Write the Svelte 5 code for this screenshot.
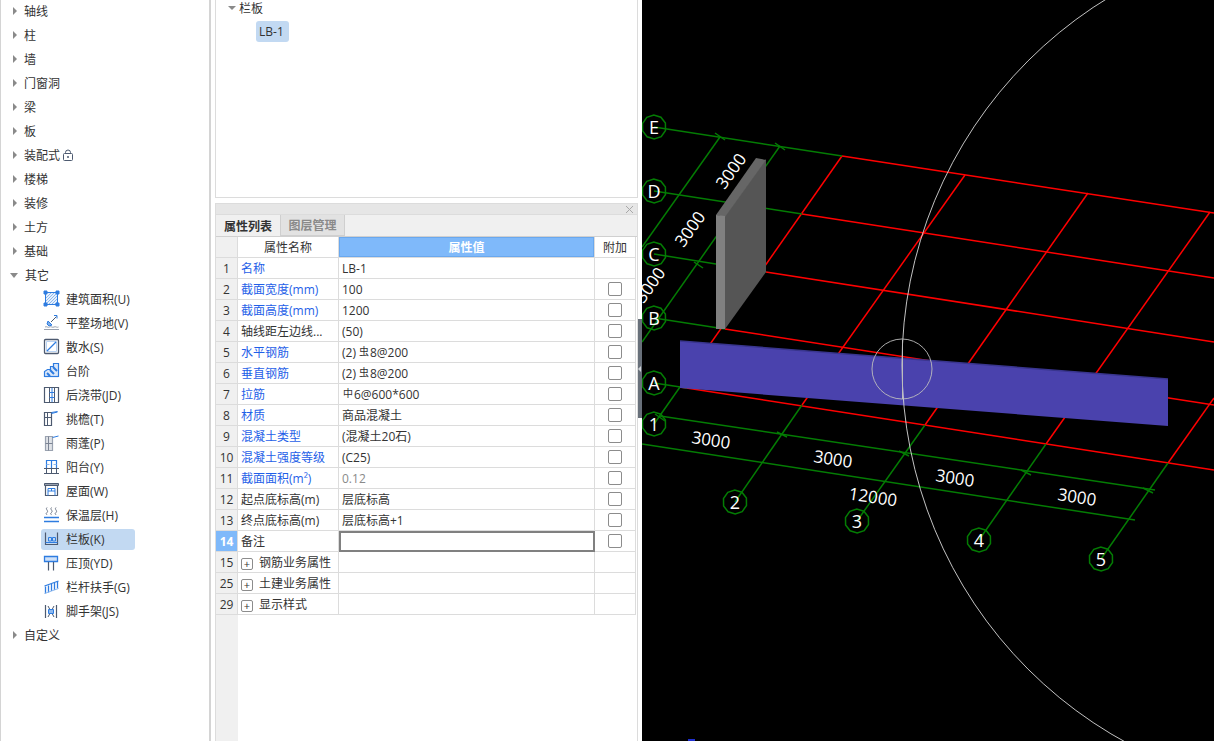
<script>
	const topGroups = ['轴线', '柱', '墙', '门窗洞', '梁', '板', '装配式', '楼梯', '装修', '土方', '基础'];

	const D = '#4d5a70';
	const B = '#2e7ce0';
	const L = '#8db8ee';
	const G = '#9aa2b0';

	// each icon: list of [path, stroke, fill, stroke width]
	const others = [
		{ name: '建筑面积(U)', icon: [
			['M2.500 2.500h12v12h-12z', B, '#e6f0fc', 1],
			['M3 8l5-5M3 11l8-8M3 14l11-11M6 14l8-8M9 14l5-5M12 14l2-2', L, 'none', 1],
			['M1 1h3v3H1zM13 1h3v3h-3zM1 13h3v3H1zM13 13h3v3h-3z', B, B, 1]
		] },
		{ name: '平整场地(V)', icon: [
			['M8 8l5.500-5.500', D, 'none', 1],
			['M5 7l4 4-3 1-2-2z', B, '#7fb0ea', 1],
			['M11 1.500h3v3', B, 'none', 1],
			['M2 13c1.500-1 3 1 4.500 0s3 1 4.500 0 3 1 4.500 0', G, 'none', 1],
			['M1 15.500h15', G, 'none', 1]
		] },
		{ name: '散水(S)', icon: [
			['M2.500 1.500h12a1 1 0 0 1 1 1v12a1 1 0 0 1-1 1h-12a1 1 0 0 1-1-1v-12a1 1 0 0 1 1-1z', D, '#fff', 1.300],
			['M3.500 3.500h10v10h-10z', '#b9d3f3', 'none', 1],
			['M4 13l9-9', B, 'none', 1.300]
		] },
		{ name: '台阶', icon: [
			['M1.500 14.500v-5l3-2h3v-3h3v-3h5v13z', B, '#dbe8fa', 1.200],
			['M4 11l3 3M7 8l4 4M10 5l4 4', B, 'none', 2],
			['M1.500 14.500h14', B, 'none', 1.200]
		] },
		{ name: '后浇带(JD)', icon: [
			['M1.500 1.500h14v15h-14z', D, 'none', 1.200],
			['M6.500 1.500v15M11.500 1.500v15', D, 'none', 1],
			['M6.500 6.500h5M6.500 11.500h5M9 2v14', B, 'none', 1]
		] },
		{ name: '挑檐(T)', icon: [
			['M1.500 2.500h7v13h-7z', D, 'none', 1.200],
			['M4.500 2.500v13M1.500 7.500h7', D, 'none', 1],
			['M8.500 3.500l6-1.500M8.500 2.500l6-1', B, 'none', 1]
		] },
		{ name: '雨蓬(P)', icon: [
			['M2.500 2.500h7v14h-7z', G, '#dfe2e7', 1.200],
			['M5.500 2.500v14', '#7c8494', 'none', 1],
			['M2.500 9.500h7', '#7c8494', 'none', 1],
			['M9.500 3.500l6-1.500', B, 'none', 1]
		] },
		{ name: '阳台(Y)', icon: [
			['M3.500 10V2.500h10V10M8.500 2.500V10', B, 'none', 1.200],
			['M3.500 6.500h3M10.500 6.500h3', L, 'none', 1],
			['M1 10.500h15M1 15.500h15', D, 'none', 1.200],
			['M3.500 10.500v5M8.500 10.500v5M13.500 10.500v5', D, 'none', 1]
		] },
		{ name: '屋面(W)', icon: [
			['M2.500 3.500h12v10h-12z', D, 'none', 1.200],
			['M1.500 1.500h14v2h-14z', D, '#99a1ae', 1],
			['M5 6.500h7v2.500H5zM5 9v4.500M12 9v4.500M8.500 6.500V9', B, 'none', 1]
		] },
		{ name: '保温层(H)', icon: [
			['M4 1.500c-2 2 2 3 0 5s0 1.500 0 2.500M8.500 1.500c-2 2 2 3 0 5s0 1.500 0 2.500M13 1.500c-2 2 2 3 0 5s0 1.500 0 2.500', '#6e7888', 'none', 1],
			['M1 11.500h15M1 15.500h15', B, 'none', 1.300]
		] },
		{ name: '栏板(K)', icon: [
			['M2.500 2.500v12h12v-12', D, 'none', 1.200],
			['M2.500 12.500h12', B, 'none', 1],
			['M5.500 7.500h3v3.500h-3zM9.500 7.500h3v3.500h-3z', B, 'none', 1]
		] },
		{ name: '压顶(YD)', icon: [
			['M1.500 2.500h13v5h-13z', B, '#cfe1f8', 1.300],
			['M5.500 8v8.500M10.500 8v8.500', D, 'none', 1.200]
		] },
		{ name: '栏杆扶手(G)', icon: [
			['M1.500 8l14-5', B, 'none', 1.300],
			['M2.500 8.500v7M5.500 7.500v7M8.500 6v7M11.500 5v7M14.500 3.500v7', B, 'none', 1.300],
			['M1.500 15.500l14-5', L, 'none', 1]
		] },
		{ name: '脚手架(JS)', icon: [
			['M2.500 3v13M13.500 3v13', D, 'none', 1.200],
			['M5 4l6 11M11 4L5 15', D, 'none', 1],
			['M5.500 7.500h5v4h-5z', B, L, 1]
		] }
	];

	const rows = [
		{ no: 1, name: '名称', value: 'LB-1', link: true, nocheck: true },
		{ no: 2, name: '截面宽度(mm)', value: '100', link: true },
		{ no: 3, name: '截面高度(mm)', value: '1200', link: true },
		{ no: 4, name: '轴线距左边线...', value: '(50)' },
		{ no: 5, name: '水平钢筋', pre: '(2)', mark: '虫', value: '8@200', link: true },
		{ no: 6, name: '垂直钢筋', pre: '(2)', mark: '虫', value: '8@200', link: true },
		{ no: 7, name: '拉筋', mark: '中', value: '6@600*600', link: true },
		{ no: 8, name: '材质', value: '商品混凝土', link: true },
		{ no: 9, name: '混凝土类型', value: '(混凝土20石)', link: true },
		{ no: 10, name: '混凝土强度等级', value: '(C25)', link: true },
		{ no: 11, name: '截面面积(m²)', value: '0.12', link: true, muted: true },
		{ no: 12, name: '起点底标高(m)', value: '层底标高' },
		{ no: 13, name: '终点底标高(m)', value: '层底标高+1' },
		{ no: 14, name: '备注', value: '', active: true },
		{ no: 15, name: '钢筋业务属性', group: true },
		{ no: 25, name: '土建业务属性', group: true },
		{ no: 29, name: '显示样式', group: true }
	];

	// canvas lines, in page coordinates
	const green = [
		[654, 127, 842, 156], [654, 191, 802, 214], [654, 254, 766, 272], [654, 318, 725, 329], [654, 383, 687, 388],
		[654, 424, 680, 387], [735, 502, 802, 405], [857, 521, 925, 425], [979, 540, 1046, 444], [1101, 559, 1168, 463],
		[720, 137, 642, 247], [780, 146, 642, 342], [660, 416, 1155, 490], [642, 444, 1135, 520]
	];
	const red = [
		[842, 156, 1214, 213], [802, 214, 1214, 278], [766, 272, 1214, 342], [725, 329, 1214, 405], [680, 387, 1214, 470],
		[680, 387, 842, 156], [802, 405, 965, 175], [925, 425, 1088, 193], [1046, 444, 1210, 212], [1168, 463, 1214, 398]
	];
	const ticks = [
		[715, 133, 725, 140], [775, 143, 785, 150], [694, 262, 703, 268], [655, 414, 665, 421], [777, 432, 787, 437], [899, 451, 909, 456], [1021, 470, 1031, 475], [1143, 488, 1153, 493]
	];
	const bubbles = [
		['E', 654, 127], ['D', 654, 191], ['C', 654, 254], ['B', 654, 318], ['A', 654, 383],
		['1', 654, 424], ['2', 735, 502], ['3', 857, 521], ['4', 979, 540], ['5', 1101, 559]
	];
	const dims = [
		['3000', 731, 171, -54], ['3000', 690, 229, -54], ['3000', 650, 285, -54],
		['3000', 711, 440, 8.600], ['3000', 833, 459, 8.600], ['3000', 955, 478, 8.600], ['3000', 1077, 497, 8.600],
		['12000', 873, 497, 8.600]
	];

	function octagon(cx, cy) {
		const pts = [];
		for (let i = 0; i < 10; i++) {
			const a = (i * Math.PI) / 5 + 0.3;
			pts.push((cx + 12 * Math.cos(a)).toFixed(1) + ',' + (cy + 12 * Math.sin(a)).toFixed(1));
		}
		return pts.join(' ');
	}
</script>

<div class="page">
	<aside class="tree">
		{#each topGroups as g}
			<div class="node">
				<span class="arrow"></span>
				<span>{g}</span>
				{#if g === '装配式'}
					<svg class="lock" width="10" height="12" viewBox="0 0 10 12">
						<path d="M2.500 5V3.500a2.500 2.500 0 0 1 5 0V5" fill="none" stroke="#4d5a70" />
						<rect x="0.500" y="4.500" width="9" height="7" rx="1" fill="#fff" stroke="#4d5a70" />
						<circle cx="5" cy="8" r="1" fill="#4d5a70" />
					</svg>
				{/if}
			</div>
		{/each}
		<div class="node">
			<span class="arrow open"></span>
			<span>其它</span>
		</div>
		{#each others as item}
			<div class="leaf">
				<svg class="ico" width="18" height="18" viewBox="0 0 18 18">
					{#each item.icon as p}
						<path d={p[0]} stroke={p[1]} fill={p[2]} stroke-width={p[3]} />
					{/each}
				</svg>
				<span class="leaf-label" class:sel={item.name === '栏板(K)'}>{item.name}</span>
			</div>
		{/each}
		<div class="node">
			<span class="arrow"></span>
			<span>自定义</span>
		</div>
	</aside>

	<section class="middle">
		<div class="list-panel">
			<div class="list-head"><span class="arrow-down"></span>栏板</div>
			<div class="chip-row"><span class="chip">LB-1</span></div>
		</div>

		<div class="props">
			<div class="strip">
				<svg width="9" height="9" viewBox="0 0 9 9"><path d="M1 1l7 7M8 1L1 8" stroke="#a8a8a8" fill="none" /></svg>
			</div>
			<div class="tabs">
				<button class="tab on">属性列表</button>
				<button class="tab">图层管理</button>
			</div>
			<table>
				<colgroup>
					<col class="c-no" />
					<col class="c-name" />
					<col class="c-val" />
					<col class="c-add" />
				</colgroup>
				<thead>
					<tr>
						<th class="no"></th>
						<th>属性名称</th>
						<th class="hl">属性值</th>
						<th>附加</th>
					</tr>
				</thead>
				<tbody>
					{#each rows as r}
						<tr>
							<td class="no" class:no-on={r.active}>{r.no}</td>
							{#if r.group}
								<td class="name"><span class="plus">+</span><span class="group-label">{r.name}</span></td>
								<td></td>
								<td></td>
							{:else}
								<td class="name" class:link={r.link}>{r.name}</td>
								<td class="val" class:muted={r.muted} class:editing={r.active}>{#if r.pre}<span class="pre">{r.pre}</span>{/if}{#if r.mark}<span class="mark">{r.mark}</span>{/if}{r.value}</td>
								<td class="add">
									{#if !r.nocheck}<input type="checkbox" />{/if}
								</td>
							{/if}
						</tr>
					{/each}
				</tbody>
			</table>
			<div class="no-rest"></div>
		</div>
	</section>

	<div class="splitter">
		<div class="grip"><span></span></div>
	</div>

	<div class="view">
		<svg width="572" height="741" viewBox="642 0 572 741">
			<g stroke="#ff0000" stroke-width="1.500">
				{#each red as l}
					<line x1={l[0]} y1={l[1]} x2={l[2]} y2={l[3]} />
				{/each}
			</g>
			<g stroke="#047c04" stroke-width="1.500">
				{#each green as l}
					<line x1={l[0]} y1={l[1]} x2={l[2]} y2={l[3]} />
				{/each}
				{#each ticks as l}
					<line x1={l[0]} y1={l[1]} x2={l[2]} y2={l[3]} />
				{/each}
			</g>

			<polygon points="725,216 766,159 766,272 725,329" fill="#555555" />
			<polygon points="716,215 756,158 766,160 725,217" fill="#666666" />
			<polygon points="716,215 725,216 725,329 716,329" fill="#808080" />

			<polygon points="680,341 1168,379 1168,426 680,388" fill="#4a42ad" />
			<line x1="680" y1="341" x2="1168" y2="379" stroke="#39358e" stroke-width="1.500" />

			<circle cx="1332" cy="365" r="430" fill="none" stroke="#d8d8d8" stroke-width="0.900" />
			<circle cx="902" cy="369" r="30" fill="none" stroke="#bdbdbd" stroke-width="0.900" />
			<line x1="902.500" y1="340" x2="902.500" y2="399" stroke="#bdbdbd" />

			{#each bubbles as b}
				<polygon points={octagon(b[1], b[2])} fill="none" stroke="#047c04" stroke-width="1.500" />
				<text x={b[1]} y={b[2] + 6.500} class="bubble">{b[0]}</text>
			{/each}
			{#each dims as t}
				<text class="dim" transform="translate({t[1]} {t[2]}) rotate({t[3]})" y="6">{t[0]}</text>
			{/each}
			<rect x="688" y="739" width="7" height="2" fill="#2030d0" />
		</svg>
	</div>
</div>

<style>
	:global(body) {
		margin: 0;
		background: #fff;
	}
	.page {
		display: flex;
		height: 741px;
		overflow: hidden;
		font: 12px "Open Sans", "Noto Sans CJK SC", sans-serif;
		color: #333;
	}

	/* left tree */
	.tree {
		width: 211px;
		box-sizing: border-box;
		flex: none;
		border-left: 1px solid #d4d4d4;
		border-right: 2px solid #d4d4d4;
	}
	.node {
		height: 24px;
		display: flex;
		align-items: center;
		padding-left: 12px;
		position: relative;
		top: -1px;
		box-sizing: border-box;
	}
	.node > span:nth-child(2) {
		margin-left: 7px;
	}
	.arrow {
		width: 0;
		height: 0;
		border-left: 4px solid #8a8a8a;
		border-top: 4px solid transparent;
		border-bottom: 4px solid transparent;
	}
	.arrow.open {
		margin-left: -3px;
		margin-right: 3px;
		border-left: 4px solid transparent;
		border-right: 4px solid transparent;
		border-top: 5px solid #8a8a8a;
		border-bottom: 0;
	}
	.node > .arrow.open + span {
		margin-left: 4px;
	}
	.lock {
		margin-left: 3px;
	}
	.leaf {
		height: 24px;
		display: flex;
		align-items: center;
		padding-left: 42px;
		position: relative;
		top: -1px;
		isolation: isolate;
	}
	.ico {
		flex: none;
	}
	.leaf-label {
		margin-left: 5px;
		line-height: 21px;
		position: relative;
	}
	.leaf-label.sel::before {
		content: '';
		position: absolute;
		left: -25px;
		top: 0;
		width: 94px;
		height: 21px;
		border-radius: 3px;
		background: #c2d9f2;
		z-index: -1;
	}

	/* middle */
	.middle {
		width: 423px;
		flex: none;
		margin-left: 4px;
		display: flex;
		flex-direction: column;
	}
	.list-panel {
		height: 198px;
		box-sizing: border-box;
		border: 1px solid #dcdcdc;
		border-top: 0;
		flex: none;
	}
	.list-head {
		height: 16px;
		display: flex;
		align-items: center;
		padding-left: 12px;
	}
	.arrow-down {
		width: 0;
		height: 0;
		margin-right: 3px;
		border-left: 4px solid transparent;
		border-right: 4px solid transparent;
		border-top: 4px solid #8a8a8a;
	}
	.chip-row {
		padding: 5px 0 0 40px;
	}
	.chip {
		display: inline-block;
		height: 21px;
		line-height: 21px;
		padding: 0 5px 0 3px;
		border-radius: 3px;
		background: #c2d9f2;
	}
	.props {
		flex: 1;
		margin-top: 5px;
		border: 1px solid #dcdcdc;
		border-bottom: 0;
		display: flex;
		flex-direction: column;
		min-height: 0;
	}
	.strip {
		height: 10px;
		background: #e6e6e6;
		border-bottom: 1px solid #dcdcdc;
		display: flex;
		justify-content: flex-end;
		align-items: center;
		padding-right: 3px;
		flex: none;
	}
	.tabs {
		height: 21px;
		background: #f0f0f0;
		display: flex;
		border-bottom: 1px solid #d0d0d0;
		flex: none;
	}
	.tab {
		border: 0;
		padding: 0;
		font: inherit;
		font-weight: 700;
		background: #f0f0f0;
		color: #333;
		width: 64px;
		height: 21px;
	}
	.tab + .tab {
		width: 65px;
		background: #e2e2e2;
		color: #8a8a8a;
		border: 1px solid #cfcfcf;
		border-top: 0;
	}
	table {
		border-collapse: separate;
		border-spacing: 0;
		table-layout: fixed;
		width: 420px;
		flex: none;
	}
	.c-no { width: 22px; }
	.c-name { width: 101px; }
	.c-val { width: 256px; }
	.c-add { width: 41px; }
	th, td {
		height: 21px;
		box-sizing: border-box;
		padding: 0;
		border-right: 1px solid #dcdcdc;
		border-bottom: 1px solid #dcdcdc;
		font-weight: 400;
		white-space: nowrap;
		overflow: hidden;
	}
	th {
		text-align: center;
	}
	th.hl {
		background: #7fb9fa;
		color: #fff;
		font-weight: 700;
		box-shadow: inset 0 0 0 1px #6aa8ee;
	}
	.no {
		background: #f0f0f0;
		text-align: center;
	}
	td.no-on {
		background: #7fb9fa;
		color: #fff;
		font-weight: 700;
	}
	td.name {
		padding-left: 3px;
	}
	.link {
		color: #1f5fe8;
	}
	td.val {
		padding-left: 3px;
	}
	.muted {
		color: #8a8a8a;
	}
	td.editing {
		border: 2px solid #808080;
	}
	.pre {
		margin-right: 2px;
	}
	.mark {
		display: inline-block;
		width: 12px;
		text-align: center;
		font-size: 10px;
		position: relative;
		top: -2px;
	}
	.add {
		text-align: center;
	}
	input[type='checkbox'] {
		appearance: none;
		display: block;
		width: 14px;
		height: 14px;
		margin: 0 0 0 13px;
		box-sizing: border-box;
		border: 1px solid #8c8c8c;
		border-radius: 2px;
		background: #fff;
	}
	.plus {
		display: inline-block;
		box-sizing: border-box;
		width: 12px;
		height: 12px;
		line-height: 9px;
		text-align: center;
		vertical-align: -1px;
		border: 1px solid #8c8c8c;
		border-radius: 2px;
		font-size: 11px;
	}
	.group-label {
		margin-left: 6px;
	}
	.no-rest {
		flex: 1;
		width: 22px;
		background: #f0f0f0;
	}

	/* splitter */
	.splitter {
		width: 4px;
		flex: none;
	}
	.grip {
		margin-top: 319px;
		height: 99px;
		background: #68707a;
		display: flex;
		align-items: center;
	}
	.grip span {
		width: 0;
		height: 0;
		border-right: 3px solid #cfd2d6;
		border-top: 3px solid transparent;
		border-bottom: 3px solid transparent;
	}

	/* canvas */
	.view {
		flex: 1;
		background: #000;
		min-width: 0;
	}
	.view svg {
		display: block;
	}
	.bubble {
		fill: #fff;
		font-size: 18px;
		text-anchor: middle;
	}
	.dim {
		fill: #fff;
		font-size: 17px;
		text-anchor: middle;
	}
</style>
